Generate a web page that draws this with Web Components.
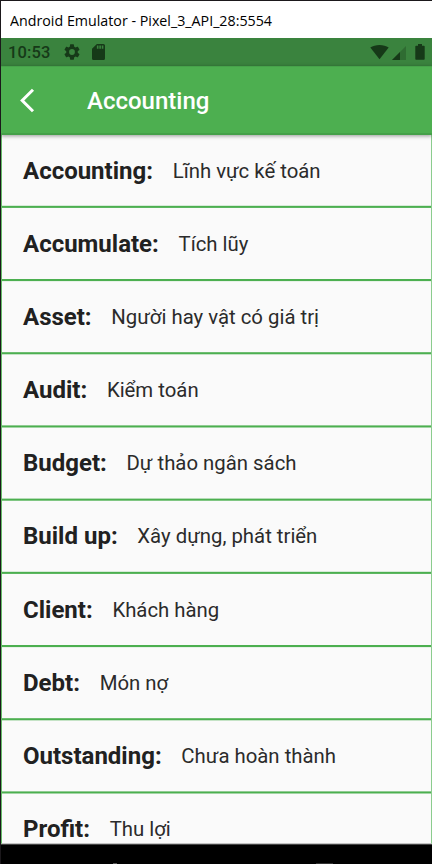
<!DOCTYPE html>
<html lang="vi">
<head>
<meta charset="utf-8">
<title>Accounting</title>
<style>
html,body{margin:0;padding:0;background:#000}
body{width:432px;height:864px;overflow:hidden}
</style>
</head>
<body>
<emulator-window>
  <window-title slot="title">Android Emulator - Pixel_3_API_28:5554</window-title>
  <status-bar></status-bar>
  <app-bar>Accounting</app-bar>
  <term-list></term-list>
  <nav-bar slot="nav"></nav-bar>
</emulator-window>
<script>
const define=(name,html,setup)=>{
  const t=document.createElement('template');
  t.innerHTML=html;
  customElements.define(name,class extends HTMLElement{
    constructor(){super();this.attachShadow({mode:'open'}).append(t.content.cloneNode(true));}
    connectedCallback(){if(setup)setup(this);}
  });
};

define('window-title',`<style>
:host{display:flex;align-items:center;box-sizing:border-box;height:37px;padding:0 0 0 9px;background:#fff;color:#000;font:15px/20px "Open Sans","Noto Sans",sans-serif;white-space:nowrap}
span{display:block;transform-origin:0 50%;transform:scaleX(.95)}
</style><span><slot></slot></span>`);

define('status-bar',`<style>
:host{display:flex;align-items:center;justify-content:space-between;box-sizing:border-box;height:28px;padding:0 7px 0 7px;background:#3a833e;color:#163918;font:500 16.500px/28px Roboto,sans-serif}
div{display:flex;align-items:center}
svg{display:block;fill:currentColor}
.time{width:56px;letter-spacing:.1px;padding-top:1px}
.gear{margin-right:12px}
</style>
<div><span class="time">10:53</span>
<svg class="gear" width="16" height="16" viewBox="2 2 20 20"><path d="M19.14 12.94c.04-.3.06-.61.06-.94s-.02-.64-.07-.94l2.03-1.58a.49.49 0 0 0 .12-.61l-1.92-3.32a.49.49 0 0 0-.59-.22l-2.39.96c-.5-.38-1.03-.7-1.62-.94l-.36-2.54a.48.48 0 0 0-.48-.41h-3.84c-.24 0-.43.17-.47.41l-.36 2.54c-.59.24-1.13.57-1.62.94l-2.39-.96a.48.48 0 0 0-.59.22L2.74 8.87c-.12.21-.08.47.12.61l2.03 1.58c-.05.3-.09.63-.09.94s.02.64.07.94l-2.03 1.58a.49.49 0 0 0-.12.61l1.92 3.32c.12.22.37.29.59.22l2.39-.96c.5.38 1.03.7 1.62.94l.36 2.54c.05.24.24.41.48.41h3.84c.24 0 .44-.17.47-.41l.36-2.54c.59-.24 1.13-.56 1.62-.94l2.39.96c.22.08.47 0 .59-.22l1.92-3.32a.48.48 0 0 0-.12-.61zM12 15.6a3.6 3.6 0 1 1 0-7.2 3.6 3.6 0 0 1 0 7.2z"/></svg>
<svg width="13" height="16" viewBox="4 2 16 20" preserveAspectRatio="none"><path d="M18 2h-8L4.020 8 4 20c0 1.100.9 2 2 2h12c1.100 0 2-.9 2-2V4c0-1.100-.9-2-2-2zm-6 6h-2V4h2v4zm3 0h-2V4h2v4zm3 0h-2V4h2v4z"/></svg></div>
<div>
<svg width="19" height="16" viewBox="0 0 19 16"><path d="M.3 3.600C2.700 1.900 6 .9 9.500.9s6.800 1 9.200 2.700L9.500 15.200z"/></svg>
<svg style="margin:1px 9px 0 3px" width="14" height="14" viewBox="0 0 14 14"><path d="M14 0v14H0z" opacity=".3"/><path d="M8 6v8H0z"/></svg>
<svg width="10" height="16" viewBox="0 0 10 16"><path d="M3 0h4v1.700h1.900q.8 0 .8.800v12.500q0 .8-.8.800H1.100q-.8 0-.8-.8V2.500q0-.8.8-.8H3z"/></svg></div>`);

define('app-bar',`<style>
:host{display:flex;align-items:center;position:relative;z-index:1;box-sizing:border-box;height:69px;padding:0 0 1px 18px;background:linear-gradient(#46a34a 0 1px,#4daf50 1px 67px,#45a049 67px);color:#fff;font:500 24px/30px Roboto,sans-serif;box-shadow:0 1px 4px #0006}
svg{display:block;margin:0 51px 0 0}
span{padding-top:2px}
</style>
<svg width="17" height="25" viewBox="0 0 17 25"><path d="M14 1.700 3.200 12.500 14 23.300" fill="none" stroke="#fff" stroke-width="3"/></svg><span><slot></slot></span>`);

define('term-row',`<style>
:host{display:flex;flex-direction:column;justify-content:flex-end}
.text{display:flex;align-items:center;padding:0 0 21px 21px;white-space:nowrap;font:20.350px/28px Roboto,sans-serif;color:#2b2b2b}
:host(:first-of-type) .text{padding-bottom:20px}
.term{font-weight:700;font-size:24px;color:#212121;margin-right:19.700px}
svg{display:block;flex:none}
</style>
<div class="text"><span class="term"><slot name="term"></slot></span><span class="meaning"><slot></slot></span></div>
<svg width="430" height="4"><rect width="430" height="2.100" fill="#4caf50"/></svg>`,el=>{
  el.shadowRoot.querySelector('rect').setAttribute('y',el.getAttribute('line'));
});

const TERMS=[['Accounting:','Lĩnh vực kế toán'],['Accumulate:','Tích lũy'],['Asset:','Người hay vật có giá trị'],['Audit:','Kiểm toán'],['Budget:','Dự thảo ngân sách'],['Build up:','Xây dựng, phát triển'],['Client:','Khách hàng'],['Debt:','Món nợ'],['Outstanding:','Chưa hoàn thành'],['Profit:','Thu lợi']];

define('term-list',`<style>
:host{display:block;height:709px;overflow:hidden;box-sizing:border-box;background:#fafafa;border-left:1px solid #65bb68;border-right:1px solid #8bcc8e;border-bottom:1px solid #c4c4c4}
</style>`,el=>{
  let prev=135;
  TERMS.forEach(([term,meaning],i)=>{
    const top=205.8+73.2*i, base=Math.floor(top+.001);
    const row=document.createElement('term-row');
    row.setAttribute('line',(top-base).toFixed(2));
    row.style.height=(base+4-prev)+'px';
    prev=base+4;
    const b=document.createElement('span');
    b.slot='term';b.textContent=term;
    row.append(b,meaning);
    el.shadowRoot.append(row);
  });
});

define('nav-bar',`<style>
:host{display:flex;justify-content:space-between;align-items:flex-end;box-sizing:border-box;height:20px;background:#000;border-top:1px solid #444;padding:0 99px 0 112px}
i{display:block;background:#333;height:1px}
.home{width:4px;background:#555}.recent{width:17px}
</style><i class="home"></i><i class="recent"></i>`);

define('emulator-window',`<style>
:host{display:block;box-sizing:border-box;width:432px;height:864px;border-top:1px solid #1b181b;border-left:1px solid #1b181b;background:#000;overflow:hidden}
</style><slot name="title"></slot><slot></slot><slot name="nav"></slot>`);
</script>
</body>
</html>
